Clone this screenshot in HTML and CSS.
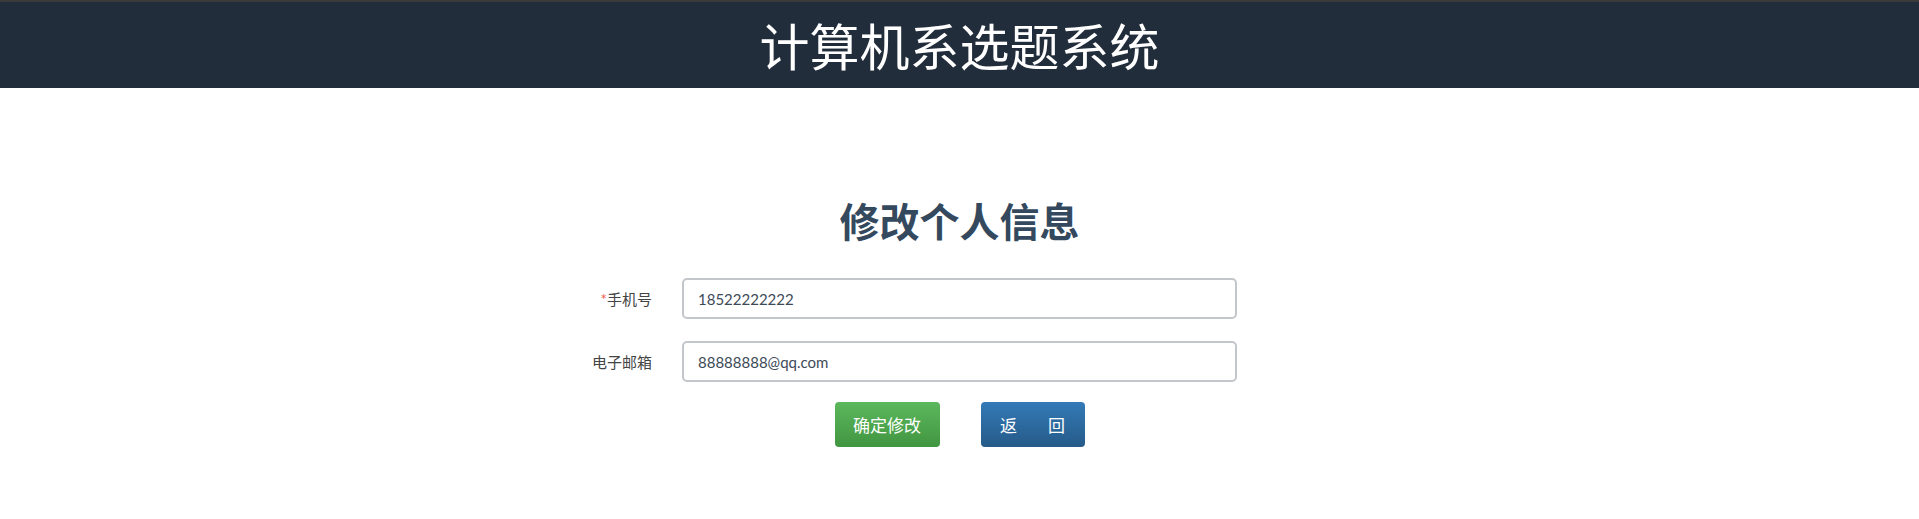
FILE: index.html
```html
<!DOCTYPE html>
<html lang="zh-CN">

<head>
    <meta charset="UTF-8">
    <meta name="viewport" content="width=device-width, initial-scale=1.0">
    <title>计算机系选题系统</title>
    <link rel="stylesheet" href="styles.css">
</head>

<body>
    <header class="site-header">
        <h1 class="site-title">计算机系选题系统</h1>
    </header>

    <div class="main">
        <h2 class="page-title">修改个人信息</h2>
        <form class="info-form" onsubmit="return false">
            <div class="form-row">
                <label for="phone" class="form-label"><span class="required">*</span>手机号</label>
                <input type="text" name="phone" id="phone" class="form-input" value="18522222222">
            </div>
            <div class="form-row">
                <label for="email" class="form-label">电子邮箱</label>
                <input type="text" name="email" id="email" class="form-input" value="88888888@qq.com">
            </div>
            <div class="btn-row">
                <button type="submit" class="btn btn-success">确定修改</button>
                <button type="button" class="btn btn-primary">返<span class="btn-gap"></span>回</button>
            </div>
        </form>
    </div>
</body>

</html>
```

FILE: styles.css
```css
body {
    margin: 0;
    background-color: #fff;
    font-family: Lato, "Noto Sans CJK SC", sans-serif;
}

.site-header {
    background-color: #222d3b;
    border-top: 2px solid #3a3a3a;
    height: 86px;
    text-align: center;
}

.site-title {
    margin: 0;
    font: 400 50px/84px "Noto Sans CJK SC", sans-serif;
    color: #fff;
}

.main {
    padding-top: 112px;
}

.page-title {
    margin: 0 0 34px;
    text-align: center;
    font: 700 40px/44px Lato, "Noto Sans CJK SC", sans-serif;
    color: #34495e;
}

.form-row {
    display: grid;
    grid-template-columns: 1fr 555px 1fr;
    align-items: center;
    margin-bottom: 22px;
}

.form-label {
    text-align: right;
    padding-right: 30px;
    font-size: 15px;
    color: #444;
}

.required {
    color: #f0564a;
}

.form-input {
    box-sizing: border-box;
    height: 41px;
    width: 100%;
    padding: 0 14px;
    border: 2px solid #c3c6ca;
    border-radius: 5px;
    font-family: Lato, "Noto Sans CJK SC", sans-serif;
    font-size: 15px;
    color: #3d4a58;
    outline: none;
}

.btn-row {
    display: flex;
    justify-content: center;
    gap: 41px;
    margin-top: -2px;
}

.btn {
    display: flex;
    align-items: center;
    justify-content: center;
    height: 45px;
    width: 105px;
    padding: 0;
    border: none;
    border-radius: 4px;
    color: #fff;
    font-family: Lato, "Noto Sans CJK SC", sans-serif;
    font-size: 17px;
    cursor: pointer;
}

.btn-gap {
    display: inline-block;
    width: 31px;
}

.btn-success {
    background-image: linear-gradient(to bottom, #5cb85c 0, #419641 100%);
}

.btn-primary {
    width: 104px;
    background-image: linear-gradient(to bottom, #337ab7 0, #265a88 100%);
}
```
